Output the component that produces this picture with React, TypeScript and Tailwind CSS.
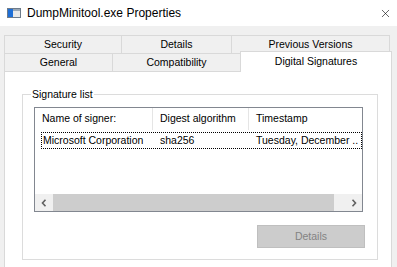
import { X } from 'lucide-react';

function Chevron({ dir }: { dir: 'left' | 'right' }) {
  return (
    <svg width="6" height="8" viewBox="0 0 6 8" className="block">
      <path
        d={dir === 'left' ? 'M4.5 0.8 L1.5 4 L4.5 7.2' : 'M1.5 0.8 L4.5 4 L1.5 7.2'}
        fill="none"
        stroke="#606060"
        strokeWidth="1.6"
      />
    </svg>
  );
}

export default function App() {
  return (
    <div className="w-[397px] h-[267px] overflow-hidden bg-[#f0f0f0] flex flex-col text-[10.5px] text-black font-['Liberation_Sans',Arial,sans-serif] select-none">
      {/* title bar */}
      <div className="h-[26px] bg-white flex items-center shrink-0">
        <svg width="14" height="10" viewBox="0 0 14 10" className="ml-[7px]">
          <rect x="0.5" y="0.5" width="13" height="9" fill="#e8e8e8" stroke="#6d7b8a" />
          <rect x="1" y="1" width="5" height="8" fill="#1f6fd6" />
          <rect x="6" y="1" width="7" height="2" fill="#9aa7b4" />
        </svg>
        <span className="ml-[6px] text-[12px] leading-none">DumpMinitool.exe Properties</span>
        <X className="ml-auto mr-[5px] w-[13px] h-[13px] text-black" strokeWidth={1.1} />
      </div>

      {/* tabs */}
      <div className="mt-[9px] ml-[4px] flex h-[18px] shrink-0">
        <div className="w-[117px] border-t border-l border-[#d9d9d9] flex items-center justify-center">Security</div>
        <div className="w-[110px] border-t border-l border-[#d9d9d9] flex items-center justify-center">Details</div>
        <div className="w-[159px] border-t border-l border-r border-[#d9d9d9] flex items-center justify-center">Previous Versions</div>
      </div>
      <div className="ml-[4px] flex items-end h-[18px] shrink-0">
        <div className="w-[108px] h-[18px] border-t border-l border-[#d9d9d9] flex items-center justify-center">General</div>
        <div className="w-[128px] h-[18px] border-t border-l border-[#d9d9d9] flex items-center justify-center">Compatibility</div>
        <div className="relative z-10 w-[152px] h-[21px] -mb-px bg-white border-t border-l border-r border-[#d9d9d9] flex items-start justify-center pt-[2px]">
          Digital Signatures
        </div>
      </div>

      {/* page */}
      <div className="ml-[4px] w-[388px] flex-1 bg-white border-t border-x border-[#d9d9d9] pl-[17px] pr-[13px] pt-[22px]">
        <div className="border border-[#dcdcdc] pb-[11px]">
          <div className="-mt-[8px] ml-[8px] px-[1px] w-fit bg-white leading-[14px]">Signature list</div>

          <div className="mt-[6px] ml-[11px] w-[329px] h-[105px] border border-[#828790] flex flex-col">
            <div className="h-[22px] flex shrink-0">
              <div className="w-[118px] border-r border-[#e5e5e5] pl-[7px] flex items-center">Name of signer:</div>
              <div className="w-[96px] border-r border-[#e5e5e5] pl-[7px] flex items-center">Digest algorithm</div>
              <div className="flex-1 pl-[7px] flex items-center">Timestamp</div>
            </div>
            <div className="mt-[2px] ml-[6px] h-[17px] border border-dotted border-black flex items-center shrink-0">
              <div className="w-[111px] pl-[1px] whitespace-nowrap">Microsoft Corporation</div>
              <div className="w-[96px] pl-[7px]">sha256</div>
              <div className="flex-1 pl-[7px] whitespace-nowrap">Tuesday, December ..</div>
            </div>
            <div className="flex-1" />
            <div className="h-[17px] flex bg-[#f0f0f0] shrink-0">
              <div className="w-[18px] flex items-center justify-center">
                <Chevron dir="left" />
              </div>
              <div className="w-[281px] bg-[#cdcdcd]" />
              <div className="flex-1" />
              <div className="w-[17px] flex items-center justify-center">
                <Chevron dir="right" />
              </div>
            </div>
          </div>

          <div className="mt-[13px] ml-auto mr-[12px] w-[108px] h-[23px] bg-[#cccccc] border border-[#bfbfbf] text-[#838383] flex items-center justify-center">
            Details
          </div>
        </div>
      </div>
    </div>
  );
}
